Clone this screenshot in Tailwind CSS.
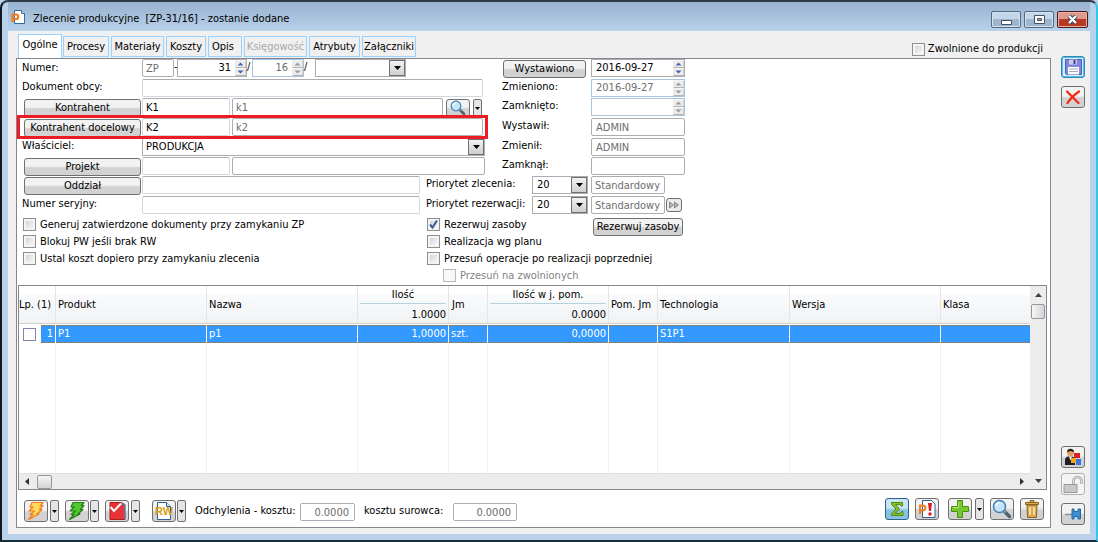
<!DOCTYPE html>
<html lang="pl">
<head>
<meta charset="utf-8">
<title>Zlecenie produkcyjne</title>
<script src="https://cdn.jsdelivr.net/npm/@tailwindcss/browser@4"></script>
</head>
<body class="bg-[#b9d1ea] font-['DejaVu_Sans_Condensed','Liberation_Sans',sans-serif] text-[11px] leading-[14px] text-black">
<svg class="hidden">
  <symbol id="down" viewBox="0 0 7 4"><path d="M0 0h7L3.500 4z" fill="currentColor"/></symbol>
  <symbol id="spin" viewBox="0 0 11 16">
    <path d="M0 .5h11v7H0zM0 8.500h11v7H0z" fill="#ececec"/><path d="M.5 7.500h10.500V1M.5 15.500h10.500V9" fill="none" stroke="#b4b4b4"/>
    <path d="M2.500 5.500 5.500 2.500l3 3zM2.500 10.500l3 3 3-3z" fill="currentColor"/>
  </symbol>
  <symbol id="lens" viewBox="0 0 20 20">
    <path d="M12.500 12.500l5 5" stroke="#4e6272" stroke-width="3.500" stroke-linecap="round"/><path d="M11 11l2.500 2.500" stroke="#9aa7b2" stroke-width="2"/>
    <circle cx="7.500" cy="7.500" r="6" fill="#c4e5f8" stroke="#3f7fb5" stroke-width="1.500"/><path d="M4 7a4 4 0 0 1 4-3.500" fill="none" stroke="#fff" stroke-width="1.500"/>
  </symbol>
  <symbol id="bolt" viewBox="0 0 20 20"><path d="M6 1.500h11l-2.500 3H17L13.500 8.500H16L11 13h2L2.500 18.500 7 13.500H4L8.500 10H3l4-4H4z" stroke-width="1.200" stroke-linejoin="round"/></symbol>
</svg>

<div class="flex min-h-screen flex-col rounded-t-lg border-2 border-t-[#2c3a48] border-r-[#35c4e6] border-b-[#16303a] border-l-[#101820] bg-[#b9d1ea] px-[6px] pb-[6px]">
  <header class="flex h-[29px] shrink-0 items-center bg-linear-to-b from-[#98b3d0] to-[#b9d1ea]">
    <svg class="ml-[3px] h-[16px] w-[14px]" viewBox="0 0 14 16"><path d="M3.500 1.500h7l3 3v10h-10z" fill="#fff" stroke="#3a6a9c"/><path d="M10.500 1.500v3h3" fill="#dbe8f4" stroke="#3a6a9c"/><path d="M1.500 13V5.500H5a2 2 0 0 1 0 4.500H2" fill="none" stroke="#f07d1a" stroke-width="2.200"/></svg>
    <h1 class="ml-2 flex-1 whitespace-pre pt-[5px]">Zlecenie produkcyjne  [ZP-31/16] - zostanie dodane</h1>
    <div class="mr-[2px] flex gap-[3px] pt-[5px]">
      <button aria-label="Minimalizuj" class="flex h-[17px] w-[30px] items-center justify-center rounded-xs border border-[#55697f] bg-linear-to-b from-[#c3d6ea] from-45% to-[#9db6d0] to-50% shadow-[inset_0_0_0_1px_#d5e3f1]"><svg class="h-[13px] w-[13px]" viewBox="0 0 13 13"><path d="M1.500 7.500h10v4h-10z" fill="#fff" stroke="#4b4f5c"/></svg></button>
      <button aria-label="Maksymalizuj" class="flex h-[17px] w-[30px] items-center justify-center rounded-xs border border-[#55697f] bg-linear-to-b from-[#c3d6ea] from-45% to-[#9db6d0] to-50% shadow-[inset_0_0_0_1px_#d5e3f1]"><svg class="h-[13px] w-[13px]" viewBox="0 0 13 13"><path d="M1.500 2.500h10v8h-10z" fill="#fff" stroke="#4b4f5c"/><path d="M4.500 5.500h4v2h-4z" fill="#aac" stroke="#4b4f5c"/></svg></button>
      <button aria-label="Zamknij" class="flex h-[17px] w-[31px] items-center justify-center rounded-xs border border-[#4d1820] bg-linear-to-b from-[#dd9a8d] from-45% to-[#b83a24] to-50% shadow-[inset_0_0_0_1px_#e6b3a8]"><svg class="h-[13px] w-[13px]" viewBox="0 0 13 13"><path d="M3 3l7 7M10 3l-7 7" stroke="#4b4f5c" stroke-width="4.500"/><path d="M3 3l7 7M10 3l-7 7" stroke="#fff" stroke-width="2.200"/></svg></button>
    </div>
  </header>

  <div class="flex flex-1 bg-[#f0f0f0] pl-2">
    <main class="flex flex-1 flex-col pb-[6px]">
      <div class="flex h-[27px] items-end justify-between">
        <nav class="flex items-end gap-[2px] pl-[2px]" role="tablist">
          <button role="tab" aria-selected="true" class="-mr-px h-[24px] w-[44px] border border-b-0 border-[#99d1ff] bg-white pb-1">Ogólne</button>
          <button role="tab" class="mb-px h-[21px] w-[46px] border border-[#99d1ff]">Procesy</button>
          <button role="tab" class="mb-px h-[21px] w-[53px] border border-[#99d1ff]">Materiały</button>
          <button role="tab" class="mb-px h-[21px] w-[40px] border border-[#99d1ff]">Koszty</button>
          <button role="tab" class="mb-px h-[21px] w-[34px] border border-[#99d1ff] pr-1">Opis</button>
          <button role="tab" disabled class="mb-px h-[21px] w-[63px] border border-[#99d1ff] text-[#a8a8a8]">Księgowość</button>
          <button role="tab" class="mb-px h-[21px] w-[51px] border border-[#99d1ff]">Atrybuty</button>
          <button role="tab" class="mb-px h-[21px] w-[54px] border border-[#99d1ff]">Załączniki</button>
        </nav>
        <label class="mr-[8px] mb-[2px] flex items-center gap-[3px]"><input type="checkbox" class="size-[13px] appearance-none border border-[#8e8f8f] bg-linear-to-br from-[#c8ccd2] to-white shadow-[inset_0_0_0_2px_#f4f4f4]">Zwolnione do produkcji</label>
      </div>

      <section class="flex flex-1 flex-col border border-[#828790] bg-white pl-px">
        <form class="grid grid-rows-[20px_19px_20px_20px_19px_19px_20px_20px] pl-1">
          <div class="flex">
            <label for="num" class="w-[120px] pt-[2px]">Numer:</label>
            <input aria-label="Seria" disabled value="ZP" class="h-[18px] w-[32px] rounded-xs border border-[#abadb3] px-[3px] text-[#6d6d6d]"><span class="w-[3px] pt-[1px]">-</span>
            <div class="flex h-[18px] w-[70px] border border-[#abadb3]"><input id="num" value="31" class="min-w-0 flex-1 pr-1 text-right"><svg class="h-[16px] w-[11px] text-[#4a62a8]"><use href="#spin"/></svg></div>
            <span class="w-[5px] pt-[1px]">/</span>
            <div class="flex h-[18px] w-[52px] border border-[#a9c4de]"><input aria-label="Rok" disabled value="16" class="min-w-0 flex-1 pr-1 text-right text-[#6d6d6d]"><svg class="h-[16px] w-[11px] text-[#9a9a9a]"><use href="#spin"/></svg></div>
            <span class="w-[11px] pt-[1px]">/</span>
            <div class="relative h-[18px] w-[91px]"><select aria-label="Seria numeru" class="h-full w-full appearance-none border border-[#abadb3] bg-white px-[3px]"><option></option></select><span class="pointer-events-none absolute top-px right-px flex h-[16px] w-[16px] items-center justify-center border border-[#707070] bg-linear-to-b from-[#f2f2f2] to-[#cfcfcf]"><svg class="h-1 w-[7px]"><use href="#down"/></svg></span></div>
            <span class="w-[97px]"></span>
            <button type="button" class="mt-px h-[18px] w-[83px] rounded-[3px] border border-[#707070] bg-linear-to-b from-[#f2f2f2] from-45% to-[#d2d2d2] to-55%">Wystawiono</button>
            <div class="ml-[5px] flex h-[18px] w-[94px] border border-[#abadb3]"><input aria-label="Data wystawienia" value="2016-09-27" class="min-w-0 flex-1 pl-1"><svg class="h-[16px] w-[11px] text-[#4a62a8]"><use href="#spin"/></svg></div>
          </div>
          <div class="flex">
            <label for="obcy" class="w-[120px] pt-px">Dokument obcy:</label>
            <input id="obcy" class="h-[18px] w-[341px] rounded-xs border border-[#d4d6de] border-t-[#abadb3]">
            <label for="zmd" class="ml-[19px] w-[89px] pt-px">Zmieniono:</label>
            <div class="flex h-[18px] w-[94px] border border-[#a9c4de]"><input id="zmd" disabled value="2016-09-27" class="min-w-0 flex-1 pl-1 text-[#6d6d6d]"><svg class="h-[16px] w-[11px] text-[#9a9a9a]"><use href="#spin"/></svg></div>
          </div>
          <div class="flex">
            <button type="button" class="mt-px mr-px ml-[2px] h-[18px] w-[117px] rounded-[3px] border border-[#707070] bg-linear-to-b from-[#f2f2f2] from-45% to-[#d2d2d2] to-55%">Kontrahent</button>
            <input aria-label="Kontrahent" value="K1" class="h-[18px] w-[88px] rounded-xs border border-[#d4d6de] border-t-[#abadb3] px-[3px]">
            <input aria-label="Nazwa kontrahenta" disabled value="k1" class="ml-[2px] h-[18px] w-[211px] rounded-xs border border-[#abadb3] px-[3px] text-[#6d6d6d]">
            <button type="button" aria-label="Szukaj" class="mt-px ml-[3px] flex h-[18px] w-[24px] items-center justify-center rounded-[3px] border border-[#707070] bg-linear-to-b from-[#f2f2f2] from-45% to-[#d2d2d2] to-55%"><svg class="size-4"><use href="#lens"/></svg></button>
            <button type="button" aria-label="Opcje" class="mt-px ml-[3px] flex h-[18px] w-[9px] items-center justify-center rounded-xs border border-[#707070] bg-[#e4e4e4]"><svg class="h-[3px] w-[5px]"><use href="#down"/></svg></button>
            <label for="zam" class="ml-[20px] w-[89px] pt-px">Zamknięto:</label>
            <div class="flex h-[18px] w-[94px] border border-[#a9c4de]"><input id="zam" disabled class="min-w-0 flex-1 pl-1"><svg class="h-[16px] w-[11px] text-[#9a9a9a]"><use href="#spin"/></svg></div>
          </div>
          <div class="relative flex">
            <div class="pointer-events-none absolute -top-[3px] -left-[5px] z-10 h-[24px] w-[471px] border-3 border-[#ed1c24]"></div>
            <button type="button" class="mt-px mr-px ml-[2px] h-[18px] w-[117px] rounded-[3px] border border-[#707070] bg-linear-to-b from-[#f2f2f2] from-45% to-[#d2d2d2] to-55%">Kontrahent docelowy</button>
            <input aria-label="Kontrahent docelowy" value="K2" class="h-[18px] w-[88px] rounded-xs border border-[#d4d6de] border-t-[#abadb3] px-[3px]">
            <input aria-label="Nazwa kontrahenta docelowego" disabled value="k2" class="ml-[2px] h-[18px] w-[251px] rounded-xs border border-[#abadb3] px-[3px] text-[#6d6d6d]">
            <label for="wys" class="ml-[19px] w-[89px] pt-px">Wystawił:</label>
            <input id="wys" disabled value="ADMIN" class="h-[18px] w-[94px] rounded-xs border border-[#abadb3] px-1 text-[#6d6d6d]">
          </div>
          <div class="flex">
            <label for="wla" class="w-[120px] pt-px">Właściciel:</label>
            <div class="relative h-[18px] w-[343px]"><select id="wla" class="h-full w-full appearance-none border border-[#abadb3] bg-white px-[3px]"><option>PRODUKCJA</option></select><span class="pointer-events-none absolute top-px right-px flex h-[16px] w-[16px] items-center justify-center border border-[#707070] bg-linear-to-b from-[#f2f2f2] to-[#cfcfcf]"><svg class="h-1 w-[7px]"><use href="#down"/></svg></span></div>
            <label for="zmi" class="ml-[17px] w-[89px] pt-px">Zmienił:</label>
            <input id="zmi" disabled value="ADMIN" class="h-[18px] w-[94px] rounded-xs border border-[#abadb3] px-1 text-[#6d6d6d]">
          </div>
          <div class="flex">
            <button type="button" class="mt-px mr-px ml-[2px] h-[18px] w-[117px] rounded-[3px] border border-[#707070] bg-linear-to-b from-[#f2f2f2] from-45% to-[#d2d2d2] to-55%">Projekt</button>
            <input aria-label="Projekt" class="h-[18px] w-[88px] rounded-xs border border-[#d4d6de] border-t-[#abadb3]">
            <input aria-label="Nazwa projektu" class="ml-[2px] h-[18px] w-[253px] rounded-xs border border-[#abadb3]">
            <label for="zmk" class="ml-[17px] w-[89px] pt-px">Zamknął:</label>
            <input id="zmk" disabled class="h-[18px] w-[94px] rounded-xs border border-[#abadb3]">
          </div>
          <div class="flex">
            <button type="button" class="mt-px mr-px ml-[2px] h-[18px] w-[117px] rounded-[3px] border border-[#707070] bg-linear-to-b from-[#f2f2f2] from-45% to-[#d2d2d2] to-55%">Oddział</button>
            <input aria-label="Oddział" class="h-[18px] w-[278px] rounded-xs border border-[#d4d6de] border-t-[#abadb3]">
            <label for="prz" class="ml-[6px] w-[106px] pt-px">Priorytet zlecenia:</label>
            <div class="relative h-[18px] w-[56px]"><select id="prz" class="h-full w-full appearance-none border border-[#abadb3] bg-white px-1"><option>20</option></select><span class="pointer-events-none absolute top-px right-px flex h-[16px] w-[16px] items-center justify-center border border-[#707070] bg-linear-to-b from-[#f2f2f2] to-[#cfcfcf]"><svg class="h-1 w-[7px]"><use href="#down"/></svg></span></div>
            <input aria-label="Nazwa priorytetu zlecenia" disabled value="Standardowy" class="ml-[3px] h-[18px] w-[74px] rounded-xs border border-[#abadb3] px-[3px] text-[#6d6d6d]">
          </div>
          <div class="flex">
            <label for="ser" class="w-[120px] pt-px">Numer seryjny:</label>
            <input id="ser" class="h-[18px] w-[278px] rounded-xs border border-[#d4d6de] border-t-[#abadb3]">
            <label for="prr" class="ml-[6px] w-[106px] pt-px">Priorytet rezerwacji:</label>
            <div class="relative h-[18px] w-[56px]"><select id="prr" class="h-full w-full appearance-none border border-[#abadb3] bg-white px-1"><option>20</option></select><span class="pointer-events-none absolute top-px right-px flex h-[16px] w-[16px] items-center justify-center border border-[#707070] bg-linear-to-b from-[#f2f2f2] to-[#cfcfcf]"><svg class="h-1 w-[7px]"><use href="#down"/></svg></span></div>
            <input aria-label="Nazwa priorytetu rezerwacji" disabled value="Standardowy" class="ml-[3px] h-[18px] w-[74px] rounded-xs border border-[#abadb3] px-[3px] text-[#6d6d6d]">
            <button type="button" aria-label="Przenieś" class="mt-[2px] ml-px flex h-[14px] w-[16px] items-center justify-center rounded-[3px] border border-[#707070] bg-[#ececec]"><svg class="h-[8px] w-[12px]" viewBox="0 0 12 8"><path d="M1.500 1v6l4-3zM6.500 1v6l4-3z" fill="#b8b8b8" stroke="#888"/></svg></button>
          </div>
        </form>

        <div class="flex pl-[5px]">
          <div class="grid w-[404px] auto-rows-[17px] content-start items-center">
            <label class="flex items-center gap-1"><input type="checkbox" class="size-[13px] appearance-none border border-[#8e8f8f] bg-linear-to-br from-[#c8ccd2] to-white shadow-[inset_0_0_0_2px_#f4f4f4]">Generuj zatwierdzone dokumenty przy zamykaniu ZP</label>
            <label class="flex items-center gap-1"><input type="checkbox" class="size-[13px] appearance-none border border-[#8e8f8f] bg-linear-to-br from-[#c8ccd2] to-white shadow-[inset_0_0_0_2px_#f4f4f4]">Blokuj PW jeśli brak RW</label>
            <label class="flex items-center gap-1"><input type="checkbox" class="size-[13px] appearance-none border border-[#8e8f8f] bg-linear-to-br from-[#c8ccd2] to-white shadow-[inset_0_0_0_2px_#f4f4f4]">Ustal koszt dopiero przy zamykaniu zlecenia</label>
          </div>
          <div class="grid auto-rows-[17px] content-start items-center">
            <div class="flex items-start">
              <label class="flex w-[166px] items-center gap-1"><span class="relative flex"><input type="checkbox" checked class="size-[13px] appearance-none border border-[#8e8f8f] bg-linear-to-br from-[#c8ccd2] to-white shadow-[inset_0_0_0_2px_#f4f4f4]"><svg class="pointer-events-none absolute inset-0 size-[13px]" viewBox="0 0 13 13"><path d="M3 6.500 5.500 9.500 10 2.500" fill="none" stroke="#3d5a96" stroke-width="2"/></svg></span>Rezerwuj zasoby</label>
              <button type="button" class="-mb-4 h-[18px] w-[90px] rounded-[3px] border border-[#707070] bg-linear-to-b from-[#f2f2f2] from-45% to-[#d2d2d2] to-55%">Rezerwuj zasoby</button>
            </div>
            <label class="flex items-center gap-1"><input type="checkbox" class="size-[13px] appearance-none border border-[#8e8f8f] bg-linear-to-br from-[#c8ccd2] to-white shadow-[inset_0_0_0_2px_#f4f4f4]">Realizacja wg planu</label>
            <label class="flex items-center gap-1"><input type="checkbox" class="size-[13px] appearance-none border border-[#8e8f8f] bg-linear-to-br from-[#c8ccd2] to-white shadow-[inset_0_0_0_2px_#f4f4f4]">Przesuń operacje po realizacji poprzedniej</label>
            <label class="ml-4 flex items-center gap-1 text-[#838383]"><input type="checkbox" disabled class="size-[13px] appearance-none border border-[#b8b8b8] bg-[#f8f8f8]">Przesuń na zwolnionych</label>
          </div>
        </div>

        <div class="mt-px mr-[3px] grid flex-1 grid-cols-[1fr_16px] grid-rows-[1fr_16px] border border-[#828790]">
          <table class="h-full w-full table-fixed border-separate border-spacing-0 text-left">
            <colgroup><col class="w-[37px]"><col class="w-[151px]"><col class="w-[151px]"><col class="w-[91px]"><col class="w-[39px]"><col class="w-[121px]"><col class="w-[49px]"><col class="w-[132px]"><col class="w-[151px]"><col></colgroup>
            <thead>
              <tr class="h-[38px] bg-linear-to-b from-white from-20% via-[#f9fafb] via-25% to-[#f1f2f3] whitespace-nowrap">
                <th class="border-r border-b border-r-[#e4e5e7] border-b-[#d0d0d0] p-0 font-normal">Lp. (1)</th>
                <th class="border-r border-b border-r-[#e4e5e7] border-b-[#d0d0d0] px-[2px] py-0 font-normal">Produkt</th>
                <th class="border-r border-b border-r-[#e4e5e7] border-b-[#d0d0d0] px-[2px] py-0 font-normal">Nazwa</th>
                <th class="border-r border-b border-r-[#e4e5e7] border-b-[#d0d0d0] px-[2px] py-0 font-normal"><div class="border-b border-[#b5d3dd] pb-px text-center">Ilość</div><div class="pt-1 text-right">1.0000</div></th>
                <th class="border-r border-b border-r-[#e4e5e7] border-b-[#d0d0d0] px-[3px] py-0 font-normal">Jm</th>
                <th class="border-r border-b border-r-[#e4e5e7] border-b-[#d0d0d0] px-[2px] py-0 font-normal"><div class="border-b border-[#b5d3dd] pb-px text-center">Ilość w j. pom.</div><div class="pt-1 text-right">0.0000</div></th>
                <th class="border-r border-b border-r-[#e4e5e7] border-b-[#d0d0d0] px-[2px] py-0 font-normal">Pom. Jm</th>
                <th class="border-r border-b border-r-[#e4e5e7] border-b-[#d0d0d0] px-[2px] py-0 font-normal">Technologia</th>
                <th class="border-r border-b border-r-[#e4e5e7] border-b-[#d0d0d0] px-[2px] py-0 font-normal">Wersja</th>
                <th class="border-b border-b-[#d0d0d0] px-[2px] py-0 font-normal">Klasa</th>
              </tr>
            </thead>
            <tbody>
              <tr class="h-px"><td colspan="10" class="p-0"></td></tr>
              <tr class="h-[18px] text-white">
                <td class="border-r border-white p-0"><div class="flex h-[18px] items-center justify-between pl-1"><input type="checkbox" aria-label="Zaznacz pozycję 1" class="size-[13px] appearance-none border border-[#8a83ab] bg-white"><span class="flex h-[18px] w-[14px] items-center justify-end border-y border-dotted border-[#cc6a00] bg-[#3399ff] pr-[2px]">1</span></div></td>
                <td class="border-y border-r border-y-[#cc6a00] border-r-white bg-[#3399ff] px-[2px] py-0 [border-style:dotted_solid]">P1</td>
                <td class="border-y border-r border-y-[#cc6a00] border-r-white bg-[#3399ff] px-[2px] py-0 [border-style:dotted_solid]">p1</td>
                <td class="border-y border-r border-y-[#cc6a00] border-r-white bg-[#3399ff] px-[2px] py-0 text-right [border-style:dotted_solid]">1,0000</td>
                <td class="border-y border-r border-y-[#cc6a00] border-r-white bg-[#3399ff] px-[2px] py-0 [border-style:dotted_solid]">szt.</td>
                <td class="border-y border-r border-y-[#cc6a00] border-r-white bg-[#3399ff] px-[2px] py-0 text-right [border-style:dotted_solid]">0,0000</td>
                <td class="border-y border-r border-y-[#cc6a00] border-r-white bg-[#3399ff] px-[2px] py-0 [border-style:dotted_solid]"></td>
                <td class="border-y border-r border-y-[#cc6a00] border-r-white bg-[#3399ff] px-[2px] py-0 [border-style:dotted_solid]">S1P1</td>
                <td class="border-y border-r border-y-[#cc6a00] border-r-white bg-[#3399ff] px-[2px] py-0 [border-style:dotted_solid]"></td>
                <td class="border-y border-y-[#cc6a00] bg-[#3399ff] px-[2px] py-0 [border-style:dotted_solid]"></td>
              </tr>
              <tr aria-hidden="true"><td class="border-r border-[#f0f0f0]"></td><td class="border-r border-[#f0f0f0]"></td><td class="border-r border-[#f0f0f0]"></td><td class="border-r border-[#f0f0f0]"></td><td class="border-r border-[#f0f0f0]"></td><td class="border-r border-[#f0f0f0]"></td><td class="border-r border-[#f0f0f0]"></td><td class="border-r border-[#f0f0f0]"></td><td class="border-r border-[#f0f0f0]"></td><td></td></tr>
            </tbody>
          </table>
          <div class="flex flex-col items-center bg-[#ececec]">
            <svg class="mt-[7px] h-[4px] w-[7px] rotate-180 text-[#404040]"><use href="#down"/></svg>
            <span class="mt-[7px] h-[15px] w-[14px] rounded-xs border border-[#979797] bg-linear-to-r from-[#f5f5f5] to-[#d4d4d8]"></span>
          </div>
          <div class="flex items-center border-t border-[#e0e0e0] bg-[#ececec]">
            <svg class="ml-[6px] h-[7px] w-[4px]" viewBox="0 0 4 7"><path d="M4 0v7L0 3.500z" fill="#303030"/></svg>
            <span class="ml-2 h-[14px] w-[15px] rounded-xs border border-[#979797] bg-linear-to-b from-[#f5f5f5] to-[#d4d4d8]"></span>
            <svg class="mr-[6px] ml-auto h-[7px] w-[4px]" viewBox="0 0 4 7"><path d="M0 0v7l4-3.500z" fill="#303030"/></svg>
          </div>
          <div class="flex items-center justify-center bg-[#ececec]"><svg class="h-[4px] w-[7px] text-[#404040]"><use href="#down"/></svg></div>
        </div>

        <div class="flex h-[37px] shrink-0 items-start pr-[6px] pl-[6px]">
          <div class="flex items-center pt-[10px]">
            <button aria-label="Generuj" class="flex h-[22px] w-[24px] items-center justify-center rounded-[3px] border border-[#707070] bg-linear-to-b from-[#f2f2f2] from-45% to-[#d2d2d2] to-55%"><svg class="size-5 fill-[#ffd95e] stroke-[#f07c1c]"><use href="#bolt"/></svg></button>
            <button aria-label="Opcje generowania" class="ml-[2px] flex h-[22px] w-[9px] items-center justify-center rounded-xs border border-[#707070] bg-[#e4e4e4]"><svg class="h-[3px] w-[5px]"><use href="#down"/></svg></button>
            <button aria-label="Uruchom" class="ml-[6px] flex h-[22px] w-[24px] items-center justify-center rounded-[3px] border border-[#707070] bg-linear-to-b from-[#f2f2f2] from-45% to-[#d2d2d2] to-55%"><svg class="size-5 fill-[#4fc82c] stroke-[#257a1c]"><use href="#bolt"/></svg></button>
            <button aria-label="Opcje uruchomienia" class="ml-px flex h-[22px] w-[9px] items-center justify-center rounded-xs border border-[#707070] bg-[#e4e4e4]"><svg class="h-[3px] w-[5px]"><use href="#down"/></svg></button>
            <button aria-label="Zatwierdź" class="ml-[6px] flex h-[22px] w-[24px] items-center justify-center rounded-[3px] border border-[#707070] bg-linear-to-b from-[#f2f2f2] from-45% to-[#d2d2d2] to-55%"><svg class="h-5 w-[18px]" viewBox="0 0 18 20"><path d="M2 1.500h11l4 2v15H2z" fill="#e93236" stroke="#a81c20"/><path d="M13 1.500l3.500 3v13.500" fill="none" stroke="#5d7aa0" stroke-width="1.500"/><path d="M2.500 6 6 10 13 2.500" fill="none" stroke="#fff" stroke-width="2"/></svg></button>
            <button aria-label="Opcje zatwierdzania" class="ml-[2px] flex h-[22px] w-[9px] items-center justify-center rounded-xs border border-[#707070] bg-[#e4e4e4]"><svg class="h-[3px] w-[5px]"><use href="#down"/></svg></button>
            <button class="relative ml-3 flex h-[22px] w-[24px] items-center justify-center rounded-[3px] border border-[#707070] bg-linear-to-b from-[#f2f2f2] from-45% to-[#d2d2d2] to-55%"><svg class="h-5 w-[14px]" viewBox="0 0 14 20"><path d="M.5 1.500h9l4 4v13H.5z" fill="#fff" stroke="#33608f"/><path d="M9.500 1.500v4h4" fill="#dbe8f4" stroke="#33608f"/></svg><span class="absolute inset-0 flex items-center justify-center font-['Liberation_Sans',sans-serif] text-[11px] font-bold text-[#d39e12]">RW</span></button>
            <button aria-label="Opcje RW" class="ml-px flex h-[22px] w-[9px] items-center justify-center rounded-xs border border-[#707070] bg-[#e4e4e4]"><svg class="h-[3px] w-[5px]"><use href="#down"/></svg></button>
            <label for="ok" class="ml-[9px] w-[105px] whitespace-nowrap">Odchylenia - kosztu:</label>
            <input id="ok" disabled value="0.0000" class="mt-[2px] h-[18px] w-[55px] rounded-xs border border-[#abadb3] px-[5px] text-right text-[#6d6d6d]">
            <label for="os" class="ml-[9px] w-[89px] whitespace-nowrap">kosztu surowca:</label>
            <input id="os" disabled value="0.0000" class="mt-[2px] h-[18px] w-[64px] rounded-xs border border-[#abadb3] px-[5px] text-right text-[#6d6d6d]">
          </div>
          <div class="ml-auto flex gap-[6px] pt-[8px]">
            <button aria-label="Suma" class="flex h-[22px] w-[24px] items-center justify-center rounded-[3px] border border-[#2c628b] bg-linear-to-b from-[#c8e4f5] from-45% to-[#87c2e3] to-55%"><svg class="h-[16px] w-[14px]" viewBox="0 0 14 16"><path d="M1.500 1.500h11v3.500h-1.500l-1-1.500H5.500L9.500 8l-4.500 4.500h5l1.500-2h1.500v4h-11.500V13L6 8 1.500 3.500z" fill="#85c226" stroke="#4f8a14"/></svg></button>
            <button aria-label="Parametry" class="flex h-[22px] w-[24px] items-center justify-center rounded-[3px] border border-[#707070] bg-linear-to-b from-[#f2f2f2] from-45% to-[#d2d2d2] to-55%"><svg class="size-[18px]" viewBox="0 0 18 18"><path d="M4.500.5h9l3.500 3.500v13.500H4.500z" fill="#fff" stroke="#33608f"/><path d="M2 14V5.500h3a2.300 2.300 0 0 1 0 5H2" fill="none" stroke="#ef8022" stroke-width="2"/><path d="M10 3h4l-1 8h-2z" fill="#e01a20"/><circle cx="12" cy="14" r="1.700" fill="#e01a20"/></svg></button>
            <div class="ml-[3px] flex gap-[3px]">
              <button aria-label="Dodaj" class="flex h-[22px] w-[24px] items-center justify-center rounded-[3px] border border-[#707070] bg-linear-to-b from-[#f2f2f2] from-45% to-[#d2d2d2] to-55%"><svg class="size-[18px]" viewBox="0 0 18 18"><path d="M6.500.5h5v6h6v5h-6v6h-5v-6h-6v-5h6z" fill="#79c92a" stroke="#478f14"/><path d="M7.500 2v5.500H2" fill="none" stroke="#b8e67e"/></svg></button>
              <button aria-label="Opcje dodawania" class="flex h-[22px] w-[9px] items-center justify-center rounded-xs border border-[#707070] bg-[#e4e4e4]"><svg class="h-[3px] w-[5px]"><use href="#down"/></svg></button>
            </div>
            <button aria-label="Podgląd" class="flex h-[22px] w-[24px] items-center justify-center rounded-[3px] border border-[#707070] bg-linear-to-b from-[#f2f2f2] from-45% to-[#d2d2d2] to-55%"><svg class="size-5"><use href="#lens"/></svg></button>
            <button aria-label="Usuń" class="flex h-[22px] w-[24px] items-center justify-center rounded-[3px] border border-[#707070] bg-linear-to-b from-[#f2f2f2] from-45% to-[#d2d2d2] to-55%"><svg class="h-[18px] w-[14px]" viewBox="0 0 14 18"><path d="M5 2V.5h4V2M.5 2.500h13v2H.5z" fill="#d9a94e" stroke="#8a6424"/><path d="M2 5h10l-.5 12.500h-9z" fill="#d9a94e" stroke="#8a6424"/><path d="M5 7v8M9 7v8" stroke="#fbe5b4" stroke-width="1.500"/></svg></button>
          </div>
        </div>
      </section>
    </main>

    <aside class="flex w-[39px] shrink-0 flex-col items-center pt-[25px] pb-[9px] pl-[5px]">
      <button aria-label="Zapisz" class="flex h-[22px] w-[24px] items-center justify-center rounded-[3px] border border-[#3c7fb1] bg-[#d9eefb] shadow-[inset_0_0_0_1px_#40c8f0]"><svg class="h-[16px] w-[17px]" viewBox="0 0 17 16"><path d="M.5.5h16v15H1.500l-1-1z" fill="#8286e0" stroke="#5356b0"/><path d="M4 .5h8v5H4z" fill="#c9cbe8"/><path d="M8.500 1h2v4h-2z" fill="#3f429c"/><path d="M3 8h11v7.500H3z" fill="#fff"/><path d="M4 10h9M4 12.500h9" stroke="#a8a8b8"/></svg></button>
      <button aria-label="Anuluj" class="mt-2 flex h-[22px] w-[24px] items-center justify-center rounded-[3px] border border-[#707070] bg-linear-to-b from-[#f2f2f2] from-45% to-[#d2d2d2] to-55%"><svg class="size-[14px]" viewBox="0 0 14 14"><path d="M1 1.500 12.500 13M13 1.500C8 5 4 9 1.500 13" fill="none" stroke="#f02a12" stroke-width="2.200" stroke-linecap="round"/></svg></button>
      <button aria-label="Kontrahenci" class="mt-auto flex h-[22px] w-[24px] items-center justify-center rounded-[3px] border border-[#707070] bg-linear-to-b from-[#f2f2f2] from-45% to-[#d2d2d2] to-55%"><svg class="size-[18px]" viewBox="0 0 18 18"><path d="M1 17v-5q0-3 3-3.500h4q3 .5 3 3.500v5z" fill="#202024"/><path d="M5 8.500h3l-1.500 4z" fill="#fff"/><circle cx="6.500" cy="5" r="3.300" fill="#e2a067"/><path d="M3 4.500Q3 .8 6.500.8T10 4.500Q8 3 6.500 3T3 4.500z" fill="#2a1c14"/><path d="M10 5h6v5h-6z" fill="#da1f1f"/><path d="M7 10h5v5H7z" fill="#f3a71a"/><path d="M12 11h5v6h-5z" fill="#3c74dc"/></svg></button>
      <button aria-label="Odblokuj" disabled class="mt-[5px] flex h-[22px] w-[24px] items-center justify-center rounded-[3px] border border-[#adb2b5] bg-[#f4f4f4]"><svg class="h-[18px] w-[20px]" viewBox="0 0 20 18"><path d="M10.500 9V6a4 4 0 0 1 8 0v3" fill="none" stroke="#a4a4a4" stroke-width="2.600"/><path d="M10.500 9V6a4 4 0 0 1 8 0v3" fill="none" stroke="#e2e2e2"/><path d="M1 9.500h13v8H1z" fill="#c8c8c8" stroke="#999"/></svg></button>
      <button aria-label="Przypnij" class="mt-2 flex h-[22px] w-[24px] items-center justify-center rounded-[3px] border border-[#707070] bg-linear-to-b from-[#f2f2f2] from-45% to-[#d2d2d2] to-55%"><svg class="h-[12px] w-[16px]" viewBox="0 0 16 12"><path d="M0 6.500h7" stroke="#8a9298" stroke-width="1.500"/><path d="M7 1h2v2.500h4V1h2.500v10H13V8.500H9V11H7z" fill="#3c8fd4" stroke="#2468a0"/></svg></button>
    </aside>
  </div>
</div>
</body>
</html>
